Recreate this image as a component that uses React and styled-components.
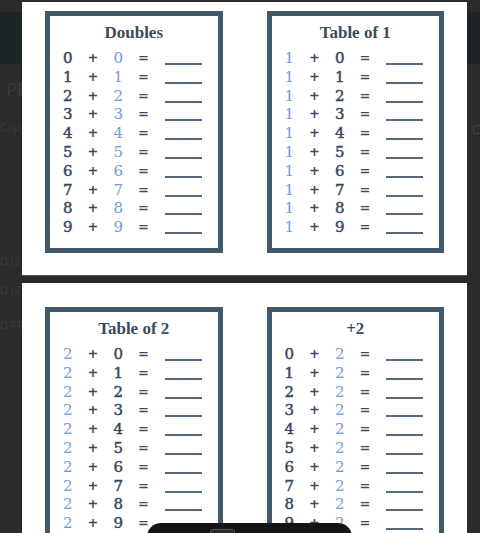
import React from 'react';
import styled, { createGlobalStyle } from 'styled-components';

const GlobalStyle = createGlobalStyle`
    html, body {
        margin: 0;
        padding: 0;
        height: 100%;
        background: #2b2b2b;
        overflow: hidden;
    }
    #root {
        height: 100%;
    }
`;

const Screen = styled.div`
    position: relative;
    width: 480px;
    height: 533px;
    overflow: hidden;
    background: #2b2b2b;
    font-family: "Open Sans", sans-serif;
`;

/* the app that sits behind the preview */
const AppHeader = styled.div`
    margin-top: 12px;
    height: 52px;
    background: #1c2426;
`;

const AppBody = styled.div`
    display: flex;
    flex-direction: column;
    color: #3c3c3c;
`;

const AppTitle = styled.div`
    font-size: 18px;
    margin: 12px 0 0 6px;
    line-height: 26px;
`;

const AppLabel = styled.div`
    font-size: 11px;
    line-height: 14px;
    margin-top: ${p => p.$top}px;
`;

const AppIcon = styled.div`
    position: absolute;
    right: -2px;
    top: 125px;
    width: 7px;
    height: 7px;
    border: 1px solid #444;
    border-radius: 2px;
`;

/* preview overlay */
const Viewer = styled.div`
    position: absolute;
    top: 2px;
    left: 22px;
    width: 445px;
    bottom: 0;
    overflow: hidden;
`;

const PageList = styled.div`
    display: flex;
    flex-direction: column;
    gap: 8px;
    margin-top: -15px;
`;

const Page = styled.div`
    background: #fff;
    padding: 24px 23px 22px;
    display: grid;
    grid-template-columns: 1fr 1fr;
    column-gap: 44px;
    box-shadow: 0 1px 0 #555;
`;

const Card = styled.div`
    border: 5px solid #41596b;
    padding: 7px 16px 11px 5px;
    color: #36495a;
`;

const CardTitle = styled.div`
    font-family: "Liberation Serif", serif;
    font-weight: 700;
    font-size: 17px;
    line-height: 20px;
    text-align: center;
    padding-left: 11px;
    margin-bottom: 6px;
    color: #3a4b5b;
`;

const Row = styled.div`
    display: grid;
    grid-template-columns: repeat(4, 25.3px) 1fr;
    height: 18.8px;
    align-items: start;
    font-family: "DejaVu Serif", serif;
    font-size: 15px;
    line-height: 18.8px;
`;

const Cell = styled.span`
    text-align: center;
    color: ${p => (p.$accent ? '#6f9bd8' : '#33475a')};
    -webkit-text-stroke: ${p => (p.$accent ? '0' : '0.45px')};
`;

const Sign = styled.span`
    text-align: center;
    font-size: 13px;
    font-weight: 700;
    color: #3a4c5c;
`;

const Blank = styled.span`
    justify-self: end;
    width: 37px;
    height: 14px;
    border-bottom: 2px solid #57687a;
`;

const Toolbar = styled.div`
    position: absolute;
    left: 147px;
    top: 523px;
    width: 205px;
    height: 40px;
    background: #151515;
    border-radius: 14px;
    display: flex;
    justify-content: flex-start;
    padding-left: 63px;
    box-sizing: border-box;
`;

const PageBox = styled.div`
    margin-top: 6px;
    width: 23px;
    height: 20px;
    border: 1px solid #555;
    border-radius: 3px;
    background: #2a2a2a;
`;

const nums = [0, 1, 2, 3, 4, 5, 6, 7, 8, 9];

const worksheets = [
    [
        { title: 'Doubles', rows: nums.map(i => [i, i]), accent: 'b' },
        { title: 'Table of 1', rows: nums.map(i => [1, i]), accent: 'a' },
    ],
    [
        { title: 'Table of 2', rows: nums.map(i => [2, i]), accent: 'a' },
        { title: '+2', rows: nums.map(i => [i, 2]), accent: 'b' },
    ],
];

function Sheet({ sheet }) {
    return (
        <Card>
            <CardTitle>{sheet.title}</CardTitle>
            {sheet.rows.map(([a, b], i) => (
                <Row key={i}>
                    <Cell $accent={sheet.accent === 'a'}>{a}</Cell>
                    <Sign>+</Sign>
                    <Cell $accent={sheet.accent === 'b'}>{b}</Cell>
                    <Sign>=</Sign>
                    <Blank />
                </Row>
            ))}
        </Card>
    );
}

export default function App() {
    return (
        <Screen>
            <GlobalStyle />
            <AppHeader />
            <AppBody>
                <AppTitle>PE</AppTitle>
                <AppLabel $top={18}>Copy</AppLabel>
                <AppLabel $top={120}>D (21</AppLabel>
                <AppLabel $top={15}>D (21</AppLabel>
                <AppLabel $top={21}>D PR</AppLabel>
            </AppBody>
            <AppIcon />
            <Viewer>
                <PageList>
                    {worksheets.map((page, i) => (
                        <Page key={i}>
                            {page.map(sheet => (
                                <Sheet key={sheet.title} sheet={sheet} />
                            ))}
                        </Page>
                    ))}
                </PageList>
            </Viewer>
            <Toolbar>
                <PageBox />
            </Toolbar>
        </Screen>
    );
}
